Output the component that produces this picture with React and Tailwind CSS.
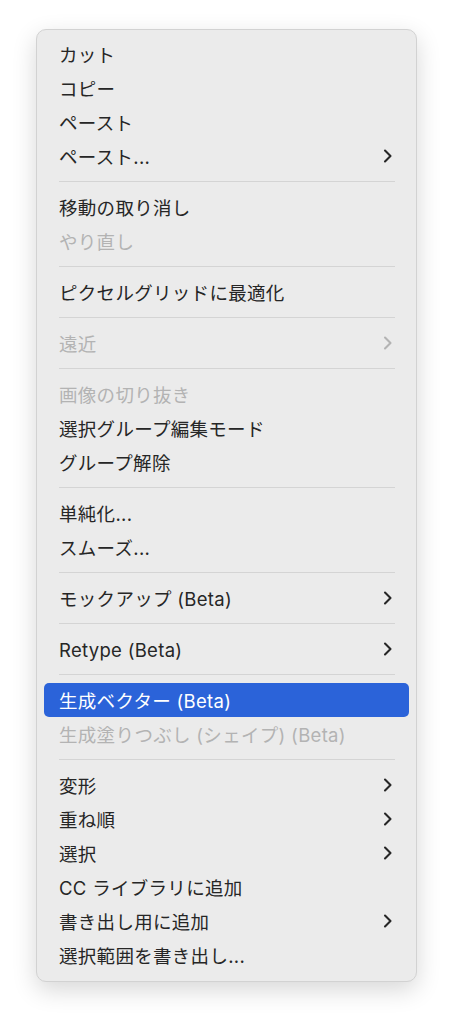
import React from "react";

const menu = [
  [
    { label: "カット" },
    { label: "コピー" },
    { label: "ペースト" },
    { label: "ペースト...", sub: true },
  ],
  [{ label: "移動の取り消し" }, { label: "やり直し", disabled: true }],
  [{ label: "ピクセルグリッドに最適化" }],
  [{ label: "遠近", disabled: true, sub: true }],
  [
    { label: "画像の切り抜き", disabled: true },
    { label: "選択グループ編集モード" },
    { label: "グループ解除" },
  ],
  [{ label: "単純化..." }, { label: "スムーズ..." }],
  [{ label: "モックアップ (Beta)", sub: true }],
  [{ label: "Retype (Beta)", sub: true }],
  [
    { label: "生成ベクター (Beta)", active: true },
    { label: "生成塗りつぶし (シェイプ) (Beta)", disabled: true },
  ],
  [
    { label: "変形", sub: true },
    { label: "重ね順", sub: true },
    { label: "選択", sub: true },
    { label: "CC ライブラリに追加" },
    { label: "書き出し用に追加", sub: true },
    { label: "選択範囲を書き出し..." },
  ],
];

function Chevron({ className }) {
  return (
    <svg viewBox="0 0 10 14" className={className} fill="none">
      <path d="M2 1.5 L7.5 7 L2 12.5" stroke="currentColor" strokeWidth="2.1" strokeLinecap="round" strokeLinejoin="round" />
    </svg>
  );
}

function MenuItem({ label, sub, disabled, active }) {
  const tone = active ? "bg-[#2b63d9] text-white" : disabled ? "text-[#b3b3b3]" : "text-[#262626]";
  return (
    <div className={`mx-[7px] flex h-[34px] items-center justify-between rounded-[5px] pl-[15px] pr-[16px] ${tone}`}>
      <span className="whitespace-nowrap pt-[3px] tracking-[0.3px]">{label}</span>
      {sub && <Chevron className={`h-[14px] w-[10px] ${disabled ? "text-[#b3b3b3]" : "text-[#262626]"}`} />}
    </div>
  );
}

export default function App() {
  return (
    <div className="min-h-[1024px] bg-white pt-[29px] pl-[36px]">
      <div
        className="w-[381px] rounded-[10px] border border-[#d2d2d2] bg-[#ebebeb] pt-[7px] pb-[9px] text-[18.5px] leading-none shadow-[0_8px_24px_rgba(0,0,0,0.16)]"
        style={{ fontFamily: "Inter, 'Noto Sans CJK JP', sans-serif" }}
      >
        {menu.map((group, gi) => (
          <div key={gi}>
            {gi > 0 && (
              <div className="flex h-[17px] items-center pl-[22px] pr-[21px]">
                <div className="h-px w-full bg-[#d4d4d4]" />
              </div>
            )}
            {group.map((item) => (
              <MenuItem key={item.label} {...item} />
            ))}
          </div>
        ))}
      </div>
    </div>
  );
}
